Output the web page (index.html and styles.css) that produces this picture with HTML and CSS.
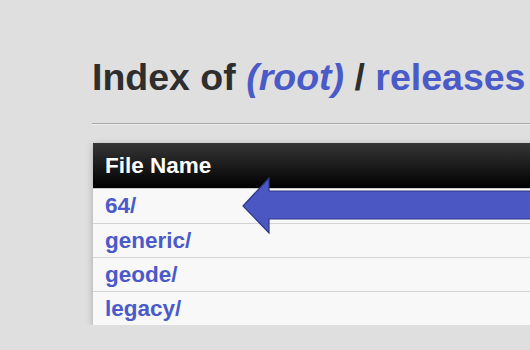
FILE: index.html
```html
<!DOCTYPE html>
<html lang="en">

<head>
    <meta charset="UTF-8">
    <meta name="viewport" content="width=device-width, initial-scale=1.0">
    <title>Index of releases</title>
    <link rel="stylesheet" href="styles.css">
</head>

<body>
    <div id="page">
        <h1 class="title">Index of <a class="root" href="#">(root)</a> / <a href="#">releases</a></h1>
        <hr class="rule">
        <div class="listing">
            <div class="listing-head">File Name</div>
            <ul class="listing-body">
                <li><a href="#">64/</a></li>
                <li><a href="#">generic/</a></li>
                <li><a href="#">geode/</a></li>
                <li><a href="#">legacy/</a></li>
            </ul>
            <!-- 指向第一行的箭头 -->
            <svg class="arrow" width="300" height="60" viewBox="0 0 300 60">
                <polygon points="1,29 27,1 27,14 300,14 300,42 27,42 27,56" fill="#4b58c3" stroke="#2e3785" stroke-width="1.2"/>
            </svg>
        </div>
    </div>
</body>

</html>
```

FILE: styles.css
```css
* {
    margin: 0;
    padding: 0;
}

html,
body {
    overflow: hidden;
}

body {
    background: #dfdfdf;
    font-family: "Liberation Sans", Arial, sans-serif;
    color: #333;
}

ul {
    list-style: none;
}

a {
    color: #4a5ac8;
    text-decoration: none;
}

#page {
    width: 700px;
    padding: 56px 0 0 92px;
}

.title {
    font-size: 37.5px;
    font-weight: bold;
    color: #2e2e2e;
}

.title .root {
    font-style: italic;
}

.rule {
    border: 0;
    border-top: 1px solid #a8a8a8;
    border-bottom: 1px solid #efefef;
    margin-top: 24px;
}

.listing {
    position: relative;
    margin-top: 18px;
    margin-left: 1px;
    box-shadow: 0 2px 7px rgba(0, 0, 0, 0.25);
}

.listing-head {
    height: 45px;
    line-height: 45px;
    padding-left: 12px;
    font-size: 22.5px;
    font-weight: bold;
    color: #fff;
    background: linear-gradient(#363636, #000);
    border-bottom: 1px solid #c8c8c8;
}

.listing-body li {
    height: 33px;
    line-height: 33px;
    padding-left: 12px;
    font-size: 22.5px;
    font-weight: bold;
    background: #f8f8f8;
    border-top: 1px solid #d4d4d4;
}

.listing-body li:first-child {
    height: 34px;
    border-top: 0;
}

.arrow {
    position: absolute;
    left: 149px;
    top: 34px;
}
```
